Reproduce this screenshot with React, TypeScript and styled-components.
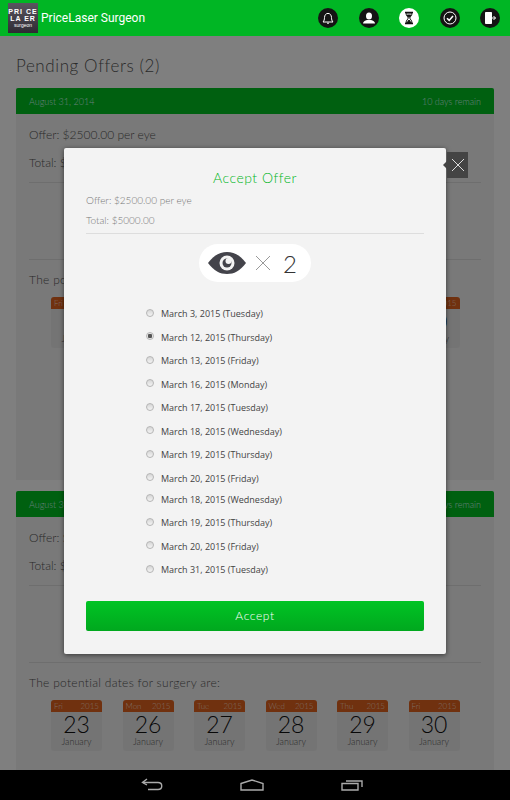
import React from 'react'
import styled, { createGlobalStyle } from 'styled-components'

const Global = createGlobalStyle`
  html, body { margin: 0; padding: 0; background: #000; }
  * { box-sizing: border-box; }
`

const Screen = styled.div`
  width: 510px;
  height: 800px;
  display: flex;
  flex-direction: column;
  overflow: hidden;
  font-family: Lato, "Open Sans", sans-serif;
`

const Header = styled.header`
  height: 36px;
  flex: none;
  background: #00b624;
  display: flex;
  align-items: center;
  padding: 0 10px 0 8px;
`

const Logo = styled.div`
  width: 30px;
  height: 30px;
  background: linear-gradient(#5a5560, #2e2b33);
  color: #fff;
  display: flex;
  flex-direction: column;
  align-items: center;
  justify-content: center;
  font-family: "Liberation Sans", sans-serif;
  font-weight: 700;
  font-size: 7px;
  line-height: 7px;
  transform-origin: center;
`

const LogoLine = styled.span<{ $small?: boolean }>`
  display: block;
  letter-spacing: ${(p) => (p.$small ? '0' : '1px')};
  font-size: ${(p) => (p.$small ? '5px' : '7px')};
  font-weight: ${(p) => (p.$small ? 400 : 700)};
`

const AppTitle = styled.div`
  margin-left: 3px;
  color: #fff;
  font-family: Roboto, sans-serif;
  font-size: 12px;
  flex: 1;
`

const IconRow = styled.nav`
  display: flex;
  gap: 20.5px;
`

const IconCircle = styled.div<{ $active?: boolean }>`
  width: 20px;
  height: 20px;
  border-radius: 50%;
  background: ${(p) => (p.$active ? '#fff' : '#141414')};
  display: flex;
  align-items: center;
  justify-content: center;
`

const Main = styled.main`
  flex: 1;
  position: relative;
  overflow: hidden;
  background: #fff;
  padding: 0 16px;
`

const PageTitle = styled.h1`
  margin: 0;
  padding-top: 19px;
  height: 52px;
  font-size: 17px;
  line-height: 21px;
  font-weight: 300;
  letter-spacing: 0.6px;
  color: #555;
`

const Card = styled.section`
  background: #f2f2f2;
  border-radius: 2px 2px 0 0;
  margin-bottom: 11px;
  height: 392px;
`

const CardHeader = styled.div`
  height: 26px;
  background: #00c020;
  border-radius: 2px 2px 0 0;
  display: flex;
  justify-content: space-between;
  align-items: center;
  padding: 0 13px;
  font-size: 9px;
  font-weight: 300;
  color: #cfe;
`

const CardBody = styled.div`
  padding: 12px 13px 0;
`

const OfferLine = styled.div`
  height: 28px;
  font-size: 12px;
  line-height: 18px;
  font-weight: 300;
  color: #555;
`

const Rule = styled.hr`
  margin: 0;
  border: 0;
  border-top: 1px solid #ddd;
`

const Spacer = styled.div`
  height: 76px;
`

const DatesIntro = styled.div`
  margin-top: 12px;
  font-size: 12px;
  line-height: 16px;
  font-weight: 300;
  letter-spacing: 0.3px;
  color: #555;
`

const CalendarRow = styled.div`
  display: flex;
  gap: 20.5px;
  margin: 9px 0 0 22px;
`

const Calendar = styled.div`
  width: 51px;
  height: 51px;
  background: #e9e9e9;
  border-radius: 3px;
  overflow: hidden;
  text-align: center;
`

const CalendarTop = styled.div`
  height: 12px;
  background: #e0621e;
  color: #fbd9c4;
  display: flex;
  justify-content: space-between;
  align-items: center;
  padding: 0 3px;
  font-size: 8px;
  font-weight: 300;
`

const CalendarDay = styled.div`
  font-size: 23px;
  line-height: 25px;
  font-weight: 300;
  color: #111;
`

const CalendarMonth = styled.div`
  font-size: 9px;
  line-height: 10px;
  font-weight: 300;
  color: #555;
`

const Overlay = styled.div`
  position: absolute;
  inset: 0;
  background: rgba(0, 0, 0, 0.5);
`

const Modal = styled.div`
  position: absolute;
  left: 64px;
  top: 112px;
  width: 382px;
  height: 506px;
  background: #f3f3f3;
  border-radius: 2px;
  box-shadow: 0 1px 5px rgba(0, 0, 0, 0.55);
  padding: 21px 22px 0;
`

const CloseButton = styled.div`
  position: absolute;
  left: 383px;
  top: 4px;
  width: 21px;
  height: 26px;
  background: #444;
  display: flex;
  align-items: center;
  justify-content: center;

  &::before {
    content: '';
    position: absolute;
    left: -4px;
    top: 9px;
    border-style: solid;
    border-width: 4px 4px 4px 0;
    border-color: transparent #444 transparent transparent;
  }
`

const ModalTitle = styled.h2`
  margin: 0 0 6px;
  font-size: 14px;
  line-height: 18px;
  font-weight: 300;
  letter-spacing: 0.5px;
  text-align: center;
  color: #00b624;
`

const ModalLine = styled.div`
  height: 20px;
  font-size: 10px;
  line-height: 14px;
  font-weight: 300;
  color: #777;
`

const EyePill = styled.div`
  width: 112px;
  height: 38px;
  margin: 10px auto 0;
  background: #fff;
  border-radius: 19px;
  display: flex;
  align-items: center;
  padding-left: 9px;
  gap: 9px;
`

const Count = styled.span`
  margin-left: 3px;
  font-size: 24px;
  font-weight: 300;
  color: #333;
`

const DateList = styled.div`
  margin: 20px 0 0 60px;
`

const DateRow = styled.label<{ $tight?: boolean }>`
  display: flex;
  align-items: center;
  height: 23.5px;
  margin-top: ${(p) => (p.$tight ? '-2.5px' : '0')};
  font-family: "Open Sans", sans-serif;
  font-size: 9px;
  color: #444;
`

const Radio = styled.span<{ $checked?: boolean }>`
  width: 8px;
  height: 8px;
  margin: -2px 7px 0 0;
  border-radius: 50%;
  border: 1px solid #b5b5b5;
  background: ${(p) => (p.$checked ? 'radial-gradient(circle, #555 0 2px, #e8e8e8 2.5px)' : 'linear-gradient(#d6d6d6, #f4f4f4)')};
`

const AcceptButton = styled.button`
  display: block;
  width: 338px;
  height: 30px;
  margin-top: 19px;
  border: 0;
  border-radius: 2px;
  background: linear-gradient(#00c424, #00a81e);
  color: #fff;
  font-family: Lato, sans-serif;
  font-size: 12px;
  font-weight: 300;
  letter-spacing: 0.6px;
`

const NavBar = styled.footer`
  height: 30px;
  flex: none;
  background: #000;
  display: flex;
  align-items: center;
  padding: 0 147px 0 141px;
  justify-content: space-between;
`

const dates = [
  'March 3, 2015 (Tuesday)',
  'March 12, 2015 (Thursday)',
  'March 13, 2015 (Friday)',
  'March 16, 2015 (Monday)',
  'March 17, 2015 (Tuesday)',
  'March 18, 2015 (Wednesday)',
  'March 19, 2015 (Thursday)',
  'March 20, 2015 (Friday)',
  'March 18, 2015 (Wednesday)',
  'March 19, 2015 (Thursday)',
  'March 20, 2015 (Friday)',
  'March 31, 2015 (Tuesday)',
]

const calendars = [
  ['Fri', '23'],
  ['Mon', '26'],
  ['Tue', '27'],
  ['Wed', '28'],
  ['Thu', '29'],
  ['Fri', '30'],
]

function OfferCard() {
  return (
    <Card>
      <CardHeader>
        <span>August 31, 2014</span>
        <span>10 days remain</span>
      </CardHeader>
      <CardBody>
        <OfferLine>Offer: $2500.00 per eye</OfferLine>
        <OfferLine>Total: $5000.00</OfferLine>
        <Rule />
        <Spacer />
        <Rule />
        <DatesIntro>The potential dates for surgery are:</DatesIntro>
        <CalendarRow>
          {calendars.map(([day, num]) => (
            <Calendar key={num}>
              <CalendarTop>
                <span>{day}</span>
                <span>2015</span>
              </CalendarTop>
              <CalendarDay>{num}</CalendarDay>
              <CalendarMonth>January</CalendarMonth>
            </Calendar>
          ))}
        </CalendarRow>
      </CardBody>
    </Card>
  )
}

export default function App() {
  return (
    <Screen>
      <Global />
      <Header>
        <Logo>
          <LogoLine>PRI CE</LogoLine>
          <LogoLine>LA ER</LogoLine>
          <LogoLine $small>surgeon</LogoLine>
        </Logo>
        <AppTitle>PriceLaser Surgeon</AppTitle>
        <IconRow>
          <IconCircle>
            <svg width="16" height="16" viewBox="0 0 16 16" fill="none" stroke="#fff" strokeWidth="1">
              <path d="M3 12c1.2-1.2 1.4-2.6 1.5-4.4C4.6 5 6 3.4 8 3.4s3.4 1.6 3.5 4.2c.1 1.8.3 3.2 1.5 4.4z" />
              <path d="M7 13.2h2" />
            </svg>
          </IconCircle>
          <IconCircle>
            <svg width="16" height="16" viewBox="0 0 16 16" fill="#fff">
              <ellipse cx="8" cy="6" rx="3" ry="3.6" />
              <path d="M2 13.5c0-2 2-2.6 4-3.4h4c2 .8 4 1.4 4 3.4z" />
            </svg>
          </IconCircle>
          <IconCircle $active>
            <svg width="16" height="16" viewBox="0 0 16 16" fill="none" stroke="#111" strokeWidth="1">
              <path d="M4 2.5h8M4 13.5h8" strokeWidth="1.4" />
              <path d="M5 3c0 3 2.2 3.6 2.2 5S5 10 5 13h6c0-3-2.2-3.6-2.2-5S11 6 11 3z" />
              <path d="M6.2 12.5L8 10l1.8 2.5z" fill="#111" />
              <path d="M6.2 5h3.6L8 7.4z" fill="#111" />
            </svg>
          </IconCircle>
          <IconCircle>
            <svg width="16" height="16" viewBox="0 0 16 16" fill="none" stroke="#fff">
              <circle cx="8" cy="8" r="6" />
              <path d="M5 8.2l2.2 2.2L11 6" strokeWidth="1.6" />
            </svg>
          </IconCircle>
          <IconCircle>
            <svg width="16" height="16" viewBox="0 0 16 16" fill="none" stroke="#fff">
              <path d="M3.5 2.5h6v11h-6z" fill="#fff" />
              <path d="M9.5 8h4M11.5 6l2 2-2 2" />
            </svg>
          </IconCircle>
        </IconRow>
      </Header>
      <Main>
        <PageTitle>Pending Offers (2)</PageTitle>
        <OfferCard />
        <OfferCard />
        <Overlay />
        <Modal>
          <CloseButton>
            <svg width="16" height="16" viewBox="0 0 16 16" stroke="#ddd" strokeWidth="1">
              <path d="M2 2l12 12M14 2L2 14" />
            </svg>
          </CloseButton>
          <ModalTitle>Accept Offer</ModalTitle>
          <ModalLine>Offer: $2500.00 per eye</ModalLine>
          <ModalLine>Total: $5000.00</ModalLine>
          <Rule />
          <EyePill>
            <svg width="38" height="24" viewBox="0 0 38 24">
              <path d="M0 12C6 4 12 1 19 1s13 3 19 11c-6 8-12 11-19 11S6 20 0 12z" fill="#43434a" />
              <circle cx="19" cy="12" r="7.5" fill="#f3f3f3" />
              <circle cx="19" cy="12" r="4.5" fill="#43434a" />
              <circle cx="20.5" cy="10" r="3" fill="#f3f3f3" />
            </svg>
            <svg width="16" height="16" viewBox="0 0 16 16" stroke="#999" strokeWidth="1">
              <path d="M1 1l14 14M15 1L1 15" />
            </svg>
            <Count>2</Count>
          </EyePill>
          <DateList>
            {dates.map((d, i) => (
              <DateRow key={i} $tight={i === 8}>
                <Radio $checked={i === 1} />
                {d}
              </DateRow>
            ))}
          </DateList>
          <AcceptButton>Accept</AcceptButton>
        </Modal>
      </Main>
      <NavBar>
        <svg width="22" height="14" viewBox="0 0 22 14" fill="none" stroke="#aaa" strokeWidth="1.4">
          <path d="M6 1L1.5 4.5 6 7" />
          <path d="M2 4.5h15c5 0 5 7 0 7H7" />
        </svg>
        <svg width="24" height="12" viewBox="0 0 24 12" fill="none" stroke="#aaa" strokeWidth="1.4">
          <path d="M1 4.5L12 1l11 3.5V11H1z" />
        </svg>
        <svg width="22" height="12" viewBox="0 0 22 12" fill="none" stroke="#aaa" strokeWidth="1.4">
          <path d="M1 4.5h16V11H1z" />
          <path d="M5 2h16v6" />
        </svg>
      </NavBar>
    </Screen>
  )
}
